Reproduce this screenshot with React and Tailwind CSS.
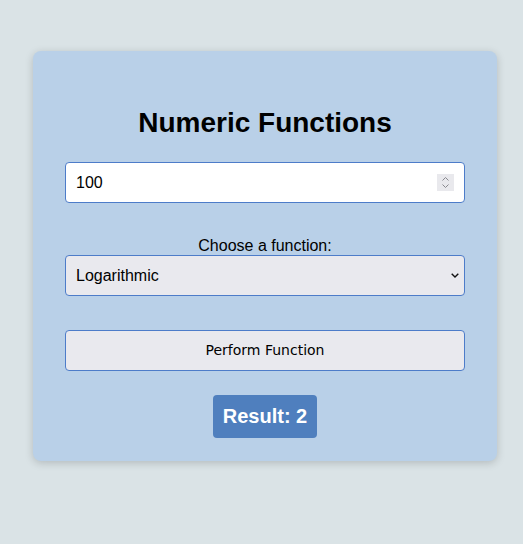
import { useState } from 'react'

export default function App() {
  const [value, setValue] = useState('100')
  const [fn, setFn] = useState('log')

  return (
    <div className="min-h-[544px] bg-[#dae3e6] pt-[51px] font-['Liberation_Sans',Arial,sans-serif]">
      <div className="ml-[33px] flex w-[464px] flex-col items-center rounded-lg bg-[#b9d0e8] px-8 pb-[23px] pt-[54px] shadow-[0_2px_8px_rgba(0,0,0,0.18)]">
        <h1 className="text-[28px] font-bold leading-[36px] text-black">
          Numeric Functions
        </h1>
        <div className="relative mt-[21px] w-full">
          <input
            type="number"
            value={value}
            onChange={(e) => setValue(e.target.value)}
            className="h-[41px] w-full rounded-[4px] border border-[#4d7cc9] bg-white px-[10px] text-[16px] text-black outline-none [&::-webkit-inner-spin-button]:appearance-none"
          />
          <div className="pointer-events-none absolute right-[11px] top-[12px] flex h-[17px] w-[17px] items-center justify-center bg-[#e9e9ed]">
            <svg width="9" height="13" viewBox="0 0 9 13" fill="none" stroke="#8a8a8f" strokeWidth="1">
              <path d="M1.5 4.5 4.5 1.5 7.5 4.5" />
              <path d="M1.5 8.5 4.5 11.5 7.5 8.5" />
            </svg>
          </div>
        </div>
        <label className="mt-[34px] text-[16px] leading-[18px] text-black">
          Choose a function:
        </label>
        <div className="relative w-full">
          <select
            value={fn}
            onChange={(e) => setFn(e.target.value)}
            className="h-[41px] w-full appearance-none rounded-[4px] border border-[#4d7cc9] bg-[#e9e9ee] px-[10px] text-[16px] text-black outline-none"
          >
            <option value="log">Logarithmic</option>
            <option value="sqrt">Square Root</option>
            <option value="sq">Square</option>
          </select>
          <svg
            className="pointer-events-none absolute right-[6px] top-[18px]"
            width="8"
            height="5"
            viewBox="0 0 8 5"
            fill="none"
            stroke="#111"
            strokeWidth="1.4"
          >
            <path d="M0.7 0.7 4 4 7.3 0.7" />
          </svg>
        </div>
        <button
          type="button"
          className="mt-[34px] h-[41px] w-full rounded-[4px] border border-[#4d7cc9] bg-[#e9e9ee] font-['DejaVu_Sans',sans-serif] text-[14px] text-black"
        >
          Perform Function
        </button>
        <div className="mt-[24px] rounded-[4px] bg-[#4f7fbe] px-[10px] py-[10px] text-[20px] font-bold leading-[23px] text-white">
          Result: 2
        </div>
      </div>
    </div>
  )
}
